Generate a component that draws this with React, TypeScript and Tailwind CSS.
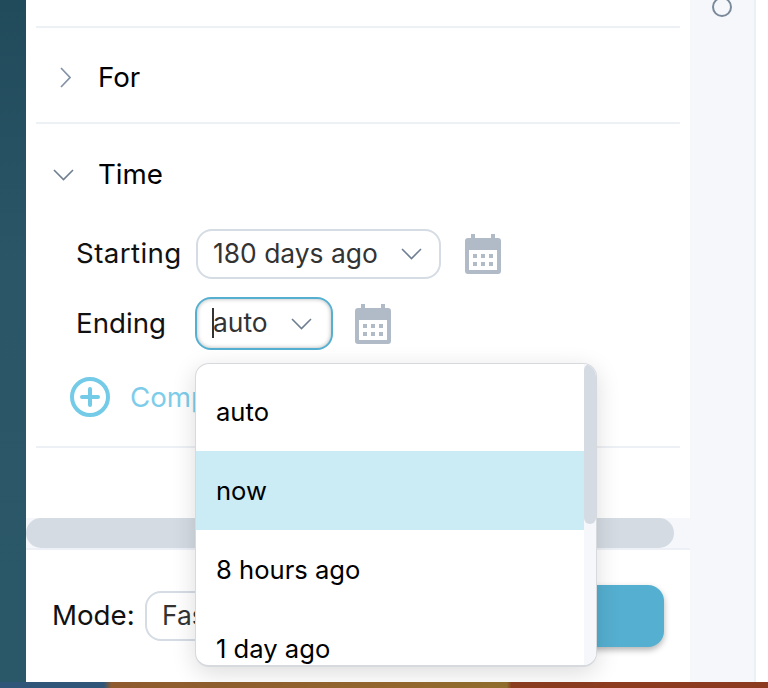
import { ReactNode } from "react";

const Chevron = ({ className = "" }: { className?: string }) => (
  <svg width="21" height="12" viewBox="0 0 21 12" fill="none" className={className}>
    <path d="M1 1 L10.5 10.5 L20 1" stroke="#6f7f92" strokeWidth="1.6" />
  </svg>
);

const ChevronRight = () => (
  <svg width="11" height="21" viewBox="0 0 11 21" fill="none">
    <path d="M1 1 L10 10.5 L1 20" stroke="#8493a5" strokeWidth="1.7" />
  </svg>
);

const CalendarIcon = () => (
  <svg width="36" height="40" viewBox="0 0 36 40" className="shrink-0">
    <path
      fillRule="evenodd"
      fill="#b0bbc7"
      d="M6 0h4v4h16V0h4v4h3a3 3 0 0 1 3 3v30a3 3 0 0 1-3 3H3a3 3 0 0 1-3-3V7a3 3 0 0 1 3-3h3V0zM4 16v20h28V16H4z"
    />
    <g fill="#b0bbc7">
      <rect x="8" y="20" width="4" height="4" />
      <rect x="16" y="20" width="4" height="4" />
      <rect x="24" y="20" width="4" height="4" />
      <rect x="8" y="28" width="4" height="4" />
      <rect x="16" y="28" width="4" height="4" />
      <rect x="24" y="28" width="4" height="4" />
    </g>
  </svg>
);

const PlusCircle = () => (
  <svg width="40" height="40" viewBox="0 0 40 40" fill="none" className="shrink-0">
    <circle cx="20" cy="20" r="18" stroke="#73cbe8" strokeWidth="4" />
    <path d="M20 12v16M12 20h16" stroke="#73cbe8" strokeWidth="4" strokeLinecap="round" />
  </svg>
);

function Section({ icon, title }: { icon: ReactNode; title: string }) {
  return (
    <div className="flex items-center">
      <div className="flex w-[62px] justify-start">{icon}</div>
      <span className="text-black">{title}</span>
    </div>
  );
}

const options = ["auto", "now", "8 hours ago", "1 day ago"];

function Dropdown() {
  return (
    <div className="absolute left-[195px] top-[363px] flex h-[304px] w-[402px] overflow-hidden rounded-[14px] border border-b-2 border-[#d6d9dd] bg-white text-[25.6px] shadow-[0_6px_24px_rgba(0,0,0,0.14)]">
      <div className="flex-1 overflow-hidden pt-[8px]">
        {options.map((o) => (
          <div
            key={o}
            className={`flex h-[79px] shrink-0 items-center pl-[20px] pt-[2px] text-black ${o === "now" ? "bg-[#cbebf5]" : ""}`}
          >
            {o}
          </div>
        ))}
      </div>
      <div className="w-[12px] shrink-0 bg-[#f5f7fb]">
        <div className="h-[160px] rounded-full bg-[#d4dbe2]" />
      </div>
    </div>
  );
}

export default function App() {
  return (
    <div className="relative flex h-[688px] w-[768px] flex-col overflow-hidden bg-white font-['Inter',sans-serif] text-[27.7px]">
      <div className="flex h-[682px]">
        <div className="w-[26px] shrink-0 bg-[linear-gradient(180deg,#214b5b,#2a5668_40%,#2b5869)]" />

        <div className="flex w-[664px] shrink-0 flex-col">
          <div className="h-[518px] shrink-0 px-[10px] pt-[26px]">
            <div className="h-[96px] border-t-2 border-[#edf0f4] pt-[29px]">
              <Section icon={<span className="ml-[24px]"><ChevronRight /></span>} title="For" />
            </div>
            <div className="h-[326px] border-y-2 border-[#edf0f4] pt-[30px]">
              <Section icon={<span className="ml-[17px]"><Chevron /></span>} title="Time" />
              <div className="mt-[33px] flex items-center pl-[40px]">
                <span className="w-[120px] tracking-[0.4px] text-[#111]">Starting</span>
                <div className="flex h-[50px] w-[245px] items-center justify-between rounded-[16px] border-2 border-[#d5dce4] pl-[15px] pr-[17px] text-[26.4px] text-[#333]">
                  180 days ago
                  <Chevron />
                </div>
                <div className="ml-[24px]">
                  <CalendarIcon />
                </div>
              </div>
              <div className="mt-[18px] flex items-center pl-[40px]">
                <span className="w-[119px] pt-[2px] text-[#111]">Ending</span>
                <div className="flex h-[53px] w-[138px] items-center justify-between rounded-[16px] border-2 border-[#55afd0] pl-[15px] pr-[19px] text-[26.4px] text-[#333] shadow-[inset_0_0_4px_rgba(0,0,0,0.3)]">
                  <span className="flex items-center">
                    <span className="-mr-[1px] h-[30px] w-[2px] bg-[#333]" />
                    auto
                  </span>
                  <Chevron className="mt-[2px]" />
                </div>
                <div className="ml-[22px] mt-[2px]">
                  <CalendarIcon />
                </div>
              </div>
              <div className="mt-[27px] flex items-center gap-[20px] pl-[34px] text-[#7dcdea]">
                <PlusCircle />
                Compare
              </div>
            </div>
          </div>

          <div className="h-[32px] shrink-0 border-b-2 border-[#edf0f6] bg-[#f5f7fb] pr-[16px]">
            <div className="h-[30px] rounded-full bg-[#d4dbe2]" />
          </div>

          <div className="flex flex-1 items-center pb-[1px] pl-[26px] pr-[26px]">
            <span className="w-[93px] text-[#111]">Mode:</span>
            <div className="flex h-[50px] w-[160px] items-center rounded-[16px] border-2 border-[#d5dce4] pl-[15px] text-[26.4px] text-[#333]">
              Fast
            </div>
            <div className="ml-auto h-[62px] w-[200px] rounded-[16px] bg-[#55afd0] shadow-[0_3px_6px_rgba(0,0,0,0.3)]" />
          </div>
        </div>

        <div className="w-[66px] shrink-0 border-r-2 border-[#ebeff6] bg-[#f5f7fb]">
          <div className="-mt-[3px] ml-[22px] h-[20px] w-[20px] rounded-full border-2 border-[#7a8a9b]" />
        </div>
        <div className="flex-1 bg-white" />
      </div>

      <div className="h-[6px] bg-[linear-gradient(90deg,#2f5578_0%,#2f5578_13.5%,#8e5a2e_14.5%,#96682f_50%,#93702f_66%,#8e3d20_66.6%,#8b3a20_100%)]" />

      <Dropdown />
    </div>
  );
}
